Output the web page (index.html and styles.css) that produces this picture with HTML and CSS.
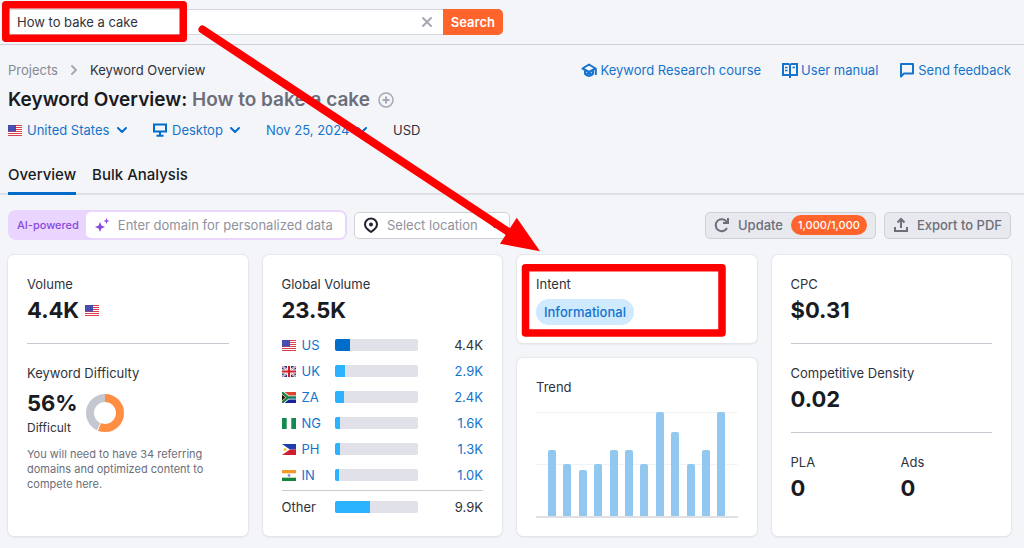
FILE: index.html
```html
<!DOCTYPE html>
<html lang="en">
<head>
<meta charset="utf-8">
<meta name="viewport" content="width=device-width, initial-scale=1">
<title>Keyword Overview: How to bake a cake</title>
<link rel="stylesheet" href="styles.css">
</head>
<body>
<svg class="defs" width="0" height="0" aria-hidden="true">
  <symbol id="chevron" viewBox="0 0 12 12"><path d="M2 4l4 4 4-4" fill="none" stroke="currentColor" stroke-width="2" stroke-linecap="round" stroke-linejoin="round"/></symbol>
  <symbol id="us" viewBox="0 0 14 11">
    <path fill="#fff" d="M0 0h14v11H0z"/>
    <path stroke="#d8404c" d="M0 .5h14M0 2.5h14M0 4.5h14M0 6.5h14M0 8.5h14M0 10.5h14"/>
    <path fill="#3f46ad" d="M0 0h8v6.500H0z"/>
    <path stroke="#8389d0" stroke-width=".6" stroke-dasharray=".7 1" d="M1 1.300h6.500M1 3.200h6.500M1 5.100h6.500"/>
  </symbol>
  <symbol id="uk" viewBox="0 0 14 11">
    <path fill="#293f84" d="M0 0h14v11H0z"/>
    <path stroke="#fff" stroke-width="2" d="M0 0l14 11M14 0L0 11"/>
    <path stroke="#d0202c" stroke-width=".7" d="M0 0l14 11M14 0L0 11"/>
    <path stroke="#fff" stroke-width="4" d="M7 0v11M0 5.500h14"/>
    <path stroke="#d0202c" stroke-width="2.200" d="M7 0v11M0 5.500h14"/>
  </symbol>
  <symbol id="za" viewBox="0 0 14 11">
    <path fill="#d9452f" d="M0 0h14v5.500H0z"/><path fill="#16219a" d="M0 5.500h14V11H0z"/>
    <path stroke="#fff" stroke-width="4" fill="none" d="M-1-.5l7 6-7 6M6 5.500h8"/>
    <path stroke="#13805a" stroke-width="2.400" fill="none" d="M-1-.5l7 6-7 6M6 5.500h8"/>
    <path fill="#e8b030" d="M0 1.800l4.300 3.700L0 9.200z"/><path fill="#111" d="M0 2.800l3.200 2.700L0 8.200z"/>
  </symbol>
  <symbol id="ng" viewBox="0 0 14 11"><path fill="#fff" d="M0 0h14v11H0z"/><path fill="#128a52" d="M0 0h4.700v11H0zM9.300 0H14v11H9.300z"/></symbol>
  <symbol id="ph" viewBox="0 0 14 11">
    <path fill="#1c3fae" d="M0 0h14v5.500H0z"/><path fill="#d01c30" d="M0 5.500h14V11H0z"/>
    <path fill="#fff" d="M0 0l8 5.500L0 11z"/><circle cx="3" cy="5.500" r="1.600" fill="#f7cf3c"/>
  </symbol>
  <symbol id="in" viewBox="0 0 14 11">
    <path fill="#fff" d="M0 0h14v11H0z"/><path fill="#f39a2d" d="M0 0h14v3.300H0z"/><path fill="#16843a" d="M0 7.700h14V11H0z"/>
    <circle cx="7" cy="5.500" r="1.400" fill="#8f93d8"/>
  </symbol>
</svg>

<header class="topbar">
  <form class="search">
    <input class="search-input" type="text" value="How to bake a cake" aria-label="Keyword">
    <button class="search-clear" type="button" aria-label="Clear">
      <svg width="12" height="12" viewBox="0 0 12 12"><path d="M2 2l8 8M10 2l-8 8" stroke="currentColor" stroke-width="2" stroke-linecap="round"/></svg>
    </button>
    <button class="search-submit" type="button">Search</button>
  </form>
</header>

<main>
  <div class="headline">
    <nav class="crumbs" aria-label="Breadcrumb">
      <a class="crumb-link" href="#">Projects</a>
      <svg class="crumb-sep" width="8" height="12" viewBox="0 0 8 12"><path d="M2 2l4 4-4 4" fill="none" stroke="currentColor" stroke-width="2" stroke-linecap="round" stroke-linejoin="round"/></svg>
      <span>Keyword Overview</span>
    </nav>
    <nav class="help" aria-label="Help">
      <a href="#">
        <svg width="16" height="16" viewBox="0 0 16 16" fill="none" stroke="currentColor" stroke-width="2" stroke-linejoin="round"><path d="M1.500 6.500L8 2.500l6.500 4L8 10z"/><path d="M4 8.500v3.200c1 1.700 2.300 2.300 4 2.300s3-.6 4-2.300V8.500M5.500 10.800c1.500 1 3.500 1 5 0"/><path d="M14.800 6.500V13"/></svg>
        Keyword Research course</a>
      <a href="#">
        <svg width="16" height="16" viewBox="0 0 16 16" fill="none" stroke="currentColor" stroke-width="2"><path d="M1 2h5.500L8 3l1.500-1H15v11H1zM8 2.500V16"/><path d="M3 5.500h2.500M3 8.500h2.500M10.500 5.500H13" stroke-width="1.500"/></svg>
        User manual</a>
      <a href="#">
        <svg width="16" height="16" viewBox="0 0 16 16" fill="none" stroke="currentColor" stroke-width="2" stroke-linejoin="round"><path d="M2 2h12v9.500H5L2 14.500z"/></svg>
        Send feedback</a>
    </nav>
  </div>

  <div class="title-row">
    <h1>Keyword Overview: <span class="title-keyword">How to bake a cake</span></h1>
    <button class="icon-button" type="button" aria-label="Add to list">
      <svg width="16" height="16" viewBox="0 0 16 16" fill="none" stroke="currentColor"><circle cx="8" cy="8" r="7" stroke-width="1.500"/><path d="M8 4.500v7M4.500 8h7" stroke-width="2"/></svg>
    </button>
  </div>

  <div class="filters">
    <div class="filter">
      <svg class="flag" width="14" height="11"><use href="#us"/></svg>
      <select aria-label="Country"><option>United States</option></select>
      <svg class="chevron" width="12" height="12"><use href="#chevron"/></svg>
    </div>
    <div class="filter">
      <svg width="14" height="14" viewBox="0 0 14 14" fill="none" stroke="currentColor" stroke-width="2"><path d="M1 1.500h12v7H1zM7 8.500V13M3.500 12.700h7"/></svg>
      <select aria-label="Device"><option>Desktop</option></select>
      <svg class="chevron" width="12" height="12"><use href="#chevron"/></svg>
    </div>
    <div class="filter">
      <select aria-label="Date"><option>Nov 25, 2024</option></select>
      <svg class="chevron" width="12" height="12"><use href="#chevron"/></svg>
    </div>
    <span>USD</span>
  </div>

  <nav class="tabs" aria-label="Reports">
    <a class="tab tab-active" href="#">Overview</a>
    <a class="tab" href="#">Bulk Analysis</a>
  </nav>

  <div class="toolbar">
    <div class="ai-field">
      <label for="domain">AI-powered</label>
      <div class="ai-input">
        <svg width="16" height="16" viewBox="0 0 16 16" fill="currentColor"><path d="M6 5l1.400 3.600L11 10l-3.600 1.400L6 15l-1.400-3.600L1 10l3.600-1.400zM12.500 1l.8 2.200 2.200.8-2.200.8-.8 2.200-.8-2.200L9.500 4l2.200-.8z"/></svg>
        <input id="domain" type="text" placeholder="Enter domain for personalized data">
      </div>
    </div>
    <div class="location">
      <svg width="16" height="16" viewBox="0 0 16 16" fill="none" stroke="currentColor" stroke-width="2"><path d="M8 1.500a6 6 0 0 1 6 6c0 3-3 5.500-6 7.500-3-2-6-4.500-6-7.500a6 6 0 0 1 6-6z"/><circle cx="8" cy="7.500" r="2" fill="currentColor" stroke="none"/></svg>
      <select aria-label="Location"><option>Select location</option></select>
      <svg class="chevron" width="12" height="12"><use href="#chevron"/></svg>
    </div>
    <div class="actions">
      <button class="action" type="button">
        <svg width="16" height="16" viewBox="0 0 16 16" fill="none" stroke="currentColor" stroke-width="2"><path d="M13 11a6 6 0 1 1-.5-6.500L14 6M14 1v5H9"/></svg>
        Update <span class="counter">1,000/1,000</span>
      </button>
      <button class="action" type="button">
        <svg width="16" height="16" viewBox="0 0 16 16" fill="none" stroke="currentColor" stroke-width="2"><path d="M8 11V2.500M4.500 5.500L8 2l3.500 3.500M2 10v4h12v-4"/></svg>
        Export to PDF
      </button>
    </div>
  </div>

  <div class="cards">
    <section class="card">
      <h2>Volume</h2>
      <p class="metric">4.4K <svg class="flag" width="14" height="11"><use href="#us"/></svg></p>
      <hr>
      <h2>Keyword Difficulty</h2>
      <div class="difficulty">
        <div>
          <p class="metric">56%</p>
          <p class="level">Difficult</p>
        </div>
        <svg width="38" height="38" viewBox="0 0 38 38" fill="none" stroke-width="8"><circle cx="19" cy="19" r="15" stroke="#c4c7cf"/><circle cx="19" cy="19" r="15" stroke="#fff" pathLength="100" stroke-dasharray="57 43" transform="rotate(-90 19 19)"/><circle cx="19" cy="19" r="15" stroke="#ff8e43" pathLength="100" stroke-dasharray="56 44" transform="rotate(-90 19 19)"/></svg>
      </div>
      <p class="note">You will need to have 34 referring domains and optimized content to compete here.</p>
    </section>

    <section class="card">
      <h2>Global Volume</h2>
      <p class="metric">23.5K</p>
      <table class="countries">
        <tbody>
          <tr class="current"><th scope="row"><svg class="flag" width="14" height="11"><use href="#us"/></svg><a href="#">US</a></th><td><div class="meter"><div class="fill" style="width:19%"></div></div></td><td class="value">4.4K</td></tr>
          <tr><th scope="row"><svg class="flag" width="14" height="11"><use href="#uk"/></svg><a href="#">UK</a></th><td><div class="meter"><div class="fill" style="width:13%"></div></div></td><td class="value"><a href="#">2.9K</a></td></tr>
          <tr><th scope="row"><svg class="flag" width="14" height="11"><use href="#za"/></svg><a href="#">ZA</a></th><td><div class="meter"><div class="fill" style="width:11%"></div></div></td><td class="value"><a href="#">2.4K</a></td></tr>
          <tr><th scope="row"><svg class="flag" width="14" height="11"><use href="#ng"/></svg><a href="#">NG</a></th><td><div class="meter"><div class="fill" style="width:7%"></div></div></td><td class="value"><a href="#">1.6K</a></td></tr>
          <tr><th scope="row"><svg class="flag" width="14" height="11"><use href="#ph"/></svg><a href="#">PH</a></th><td><div class="meter"><div class="fill" style="width:6%"></div></div></td><td class="value"><a href="#">1.3K</a></td></tr>
          <tr><th scope="row"><svg class="flag" width="14" height="11"><use href="#in"/></svg><a href="#">IN</a></th><td><div class="meter"><div class="fill" style="width:5%"></div></div></td><td class="value"><a href="#">1.0K</a></td></tr>
        </tbody>
        <tfoot>
          <tr><th scope="row">Other</th><td><div class="meter"><div class="fill" style="width:43%"></div></div></td><td class="value">9.9K</td></tr>
        </tfoot>
      </table>
    </section>

    <div class="stack">
      <section class="card intent">
        <h2>Intent</h2>
        <span class="tag">Informational</span>
      </section>
      <section class="card trend">
        <h2>Trend</h2>
        <div class="chart" role="img" aria-label="Search trend over twelve months">
          <div class="bar" style="height:63%"></div>
          <div class="bar" style="height:50%"></div>
          <div class="bar" style="height:44%"></div>
          <div class="bar" style="height:50%"></div>
          <div class="bar" style="height:63%"></div>
          <div class="bar" style="height:63%"></div>
          <div class="bar" style="height:50%"></div>
          <div class="bar" style="height:100%"></div>
          <div class="bar" style="height:81%"></div>
          <div class="bar" style="height:50%"></div>
          <div class="bar" style="height:63%"></div>
          <div class="bar" style="height:100%"></div>
        </div>
      </section>
    </div>

    <section class="card">
      <h2>CPC</h2>
      <p class="metric">$0.31</p>
      <hr>
      <h2>Competitive Density</h2>
      <p class="metric">0.02</p>
      <hr>
      <div class="pair">
        <div><h2>PLA</h2><p class="metric">0</p></div>
        <div><h2>Ads</h2><p class="metric">0</p></div>
      </div>
    </section>
  </div>
</main>

<svg class="annotations" width="740" height="340" viewBox="0 0 740 340" fill="none" stroke="#fe0000" stroke-linejoin="round" aria-hidden="true">
  <rect x="5.750" y="4.750" width="177.500" height="33.500" stroke-width="7.500"/>
  <rect x="525.500" y="267.700" width="196.500" height="65.300" stroke-width="7.500"/>
  <path d="M202.500 29.500L510 233" stroke-width="8" stroke-linecap="round"/>
  <path d="M516.700 217.700L540 251.200 500 243.700z" fill="#fe0000" stroke="none"/>
</svg>
</body>
</html>
```

FILE: styles.css
```css
* { box-sizing: border-box; }

body {
  margin: 0;
  min-height: 100vh;
  background: #f4f5f9;
  color: #2f323b;
  font: 13px/20px Inter, "Liberation Sans", sans-serif;
}

h1, h2, p { margin: 0; font-weight: 400; }
a { color: #1473cc; text-decoration: none; }
svg { display: block; flex: none; }
button, input, select { font: inherit; color: inherit; margin: 0; }

.defs { position: absolute; }

.topbar {
  padding: 9px 8px;
  border-bottom: 1px solid #cfd0d6;
}

.search { display: flex; width: 495px; }

.search-input {
  flex: 1;
  min-width: 0;
  height: 26px;
  padding: 0 8px;
  border: 1px solid #d5d7de;
  border-right: 0;
  border-radius: 5px 0 0 5px;
  background: #fff;
}

.search-clear {
  display: flex;
  align-items: center;
  padding: 0 10px;
  border: 1px solid #d5d7de;
  border-width: 1px 0;
  background: #fff;
  color: #a5a8b3;
}

.search-submit {
  padding: 0 8px;
  border: 0;
  border-radius: 0 5px 5px 0;
  background: #ff642d;
  color: #fff;
  font-weight: 600;
}

.headline {
  display: flex;
  justify-content: space-between;
  padding: 15px 13px 0 8px;
}

.crumbs, .help, .help a, .title-row, .filters, .filter { display: flex; align-items: center; }
.crumbs { gap: 12px; }
.crumb-link { color: #858894; }
.crumb-sep { color: #a5a8b3; }
.help { gap: 21px; }
.help a { gap: 3px; }

.title-row { gap: 8px; padding: 8px 8px 0; }
h1 { font-size: 19px; line-height: 24px; font-weight: 600; color: #191b23; }
.title-keyword { color: #6c6e79; }
.icon-button { padding: 0; border: 0; background: none; color: #a5a8b3; }

.filters { gap: 25px; padding: 8px 8px 0; }
.filter { gap: 5px; color: #006dca; }

select {
  appearance: none;
  padding: 0;
  border: 0;
  background: none;
}

.filter select { color: #1473cc; }
.filter .chevron { margin-left: 1px; }

.tabs {
  display: flex;
  gap: 16px;
  margin-top: 25px;
  padding: 0 8px;
  border-bottom: 2px solid #dfe0e5;
}

.tab {
  margin-bottom: -2px;
  padding-bottom: 7px;
  border-bottom: 3px solid transparent;
  color: #191b23;
  font-size: 15px;
  font-weight: 500;
}

.tab-active { border-color: #006dca; }

.toolbar {
  display: flex;
  align-items: center;
  gap: 7px;
  padding: 15px 13px 0 8px;
}

.ai-field {
  display: flex;
  align-items: center;
  width: 339px;
  padding: 2px;
  border-radius: 8px;
  background: #ead5ff;
}

.ai-field label { padding: 0 7px; color: #8649e1; font-size: 11px; font-weight: 500; }

.ai-input {
  display: flex;
  flex: 1;
  align-items: center;
  gap: 8px;
  min-width: 0;
  height: 26px;
  padding: 0 8px;
  border-radius: 5px;
  background: #fff;
  color: #8649e1;
}

.ai-input input { flex: 1; min-width: 0; padding: 0; border: 0; background: none; }
.ai-input input::placeholder { color: #8f929d; opacity: 1; }

.location {
  display: flex;
  align-items: center;
  gap: 8px;
  height: 27px;
  padding: 0 8px;
  border: 1px solid #d0d2da;
  border-radius: 5px;
  background: #fff;
  color: #22252e;
}

.location select { color: #8f929d; }
.location .chevron { margin-left: 3px; }

.actions { display: flex; gap: 8px; margin-left: auto; }

.action {
  display: flex;
  align-items: center;
  gap: 8px;
  height: 27px;
  padding: 0 8px;
  border: 1px solid #cfd0d7;
  border-radius: 5px;
  background: #e8e9ee;
  color: #6c6e79;
  font-weight: 500;
}

.counter {
  padding: 0 7px;
  border-radius: 10px;
  background: #ff642d;
  color: #fff;
  font-size: 11px;
}

.cards {
  display: grid;
  grid-template-columns: repeat(4, minmax(0, 1fr));
  gap: 15px;
  padding: 15px 13px 12px 8px;
}

.card {
  padding: 19px 19px 12px;
  border-radius: 6px;
  background: #fff;
  box-shadow: 0 0 1px 1px #e6e7ec, 0 1px 2px #d5d7de;
}

.card h2 { font-size: 13px; line-height: 20px; }

.metric {
  display: flex;
  align-items: center;
  gap: 6px;
  color: #191b23;
  font-size: 22px;
  line-height: 32px;
  font-weight: 700;
}

hr { margin: 17px 0 19px; border: 0; border-top: 1px solid #c8cad1; }

.difficulty { display: flex; align-items: center; gap: 8px; margin-top: 5px; }
.difficulty .metric { line-height: 30px; }
.level { font-size: 12px; }
.note { margin-top: 9px; color: #6c6e79; font-size: 11px; line-height: 15px; }

.countries { width: 100%; margin-top: 6px; border-collapse: collapse; }
.countries th, .countries td { height: 26px; padding: 0; line-height: 20px; }
.countries th { width: 53px; text-align: left; font-weight: 400; }
.countries .flag { display: inline-block; margin-right: 6px; vertical-align: -1px; }
.countries .value { width: 65px; text-align: right; }
.countries tbody tr:last-child > * { height: 28px; padding-bottom: 2px; }
.countries tfoot th, .countries tfoot td { height: 34px; border-top: 1px solid #c8cad1; }

.meter { height: 12px; overflow: hidden; border-radius: 2px; background: #e0e1e9; }
.fill { height: 100%; background: #2bb3ff; }
.current .fill { background: #006dca; }

.stack { display: flex; flex-direction: column; gap: 15px; }
.intent { padding-bottom: 18px; }

.tag {
  display: inline-block;
  margin-top: 5px;
  padding: 3px 8px;
  border-radius: 13px;
  background: #cfe9ff;
  color: #1473cc;
  font-weight: 500;
}

.trend { flex: 1; }

.chart {
  display: flex;
  align-items: flex-end;
  justify-content: space-between;
  height: 106px;
  margin-top: 15px;
  padding: 0 12px;
  border-bottom: 2px solid #dfe0e6;
  background:
    linear-gradient(#f1f2f4, #f1f2f4) top / 100% 1px no-repeat,
    linear-gradient(#f1f2f4, #f1f2f4) center / 100% 1px no-repeat;
}

.bar { width: 8px; border-radius: 2px 2px 0 0; background: #92c7ef; }

.pair { display: grid; grid-template-columns: 110px 1fr; }

.annotations { position: absolute; top: 0; left: 0; pointer-events: none; }
```
